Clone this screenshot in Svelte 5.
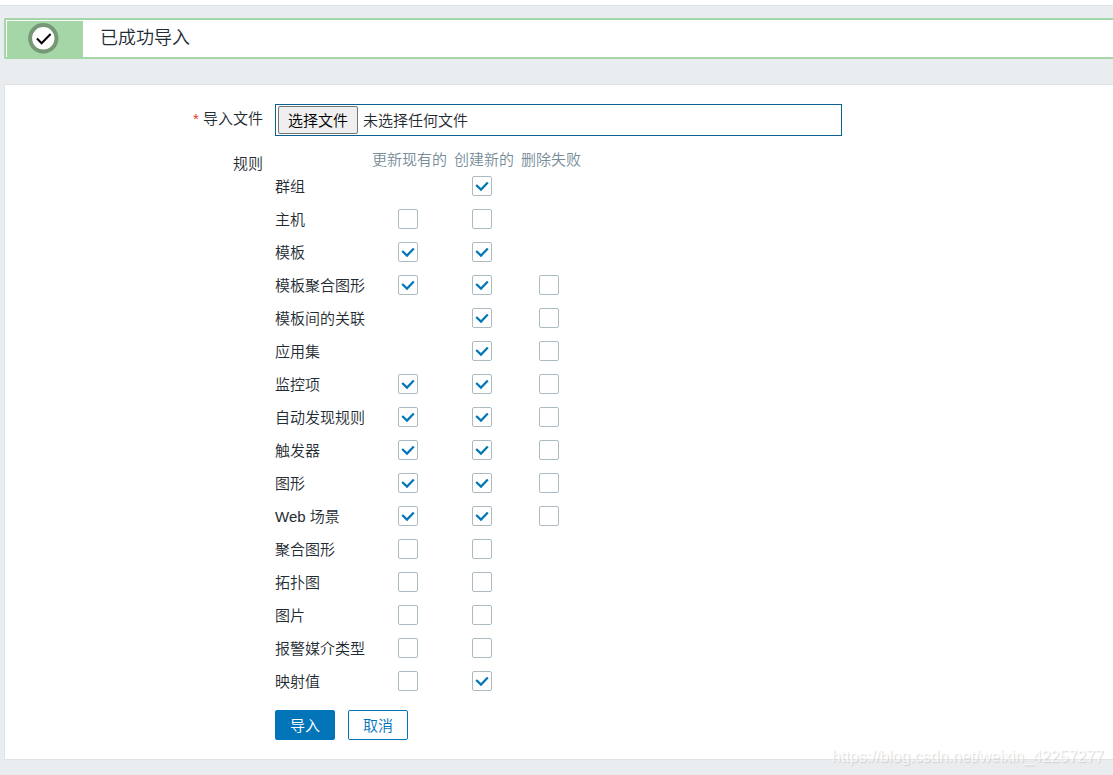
<script lang="ts">

let columns = ['更新现有的', '创建新的', '删除失败']

// null = the option does not exist for this rule
let rules: { name: string, options: (boolean | null)[] }[] = $state([
    { name: '群组', options: [null, true, null] },
    { name: '主机', options: [false, false, null] },
    { name: '模板', options: [true, true, null] },
    { name: '模板聚合图形', options: [true, true, false] },
    { name: '模板间的关联', options: [null, true, false] },
    { name: '应用集', options: [null, true, false] },
    { name: '监控项', options: [true, true, false] },
    { name: '自动发现规则', options: [true, true, false] },
    { name: '触发器', options: [true, true, false] },
    { name: '图形', options: [true, true, false] },
    { name: 'Web 场景', options: [true, true, false] },
    { name: '聚合图形', options: [false, false, null] },
    { name: '拓扑图', options: [false, false, null] },
    { name: '图片', options: [false, false, null] },
    { name: '报警媒介类型', options: [false, false, null] },
    { name: '映射值', options: [false, true, null] }
])

let fileName = $state('')

function fileHandle(e: any) {
    fileName = e.target.files[0]?.name ?? ''
}

</script>

<div class="page">
    <div class="topbar"></div>

    <div class="message" role="status">
        <div class="message-icon">
            <svg width="32" height="32" viewBox="0 0 32 32">
                <circle cx="16.3" cy="16.3" r="13.2" fill="#fff" stroke="#779877" stroke-width="4" />
                <path d="M10 16.5l4.6 4.8 9-9.3" fill="none" stroke="#000" stroke-width="2" />
            </svg>
        </div>
        <span class="message-text">已成功导入</span>
    </div>

    <form class="panel" onsubmit={(e) => e.preventDefault()}>
        <div class="row">
            <label class="row-label" for="import-file"><span class="required">*</span> 导入文件</label>
            <div class="file">
                <span class="file-button">选择文件</span>
                <span class="file-name">{fileName || '未选择任何文件'}</span>
                <input type="file" id="import-file" onchange={fileHandle}>
            </div>
        </div>

        <div class="row rules">
            <span class="row-label" id="rules-label">规则</span>
            <table aria-labelledby="rules-label">
                <thead>
                    <tr>
                        <td></td>
                        {#each columns as column}
                            <th scope="col">{column}</th>
                        {/each}
                    </tr>
                </thead>
                <tbody>
                    {#each rules as rule}
                        <tr>
                            <th scope="row">{rule.name}</th>
                            {#each rule.options as option, i}
                                <td>
                                    {#if option !== null}
                                        <label class="check">
                                            <input type="checkbox" aria-label="{rule.name} {columns[i]}" bind:checked={rule.options[i]}>
                                            <svg width="20" height="20" viewBox="0 0 20 20">
                                                <path d="M4.2 9l4.8 4.6 6.8-7" fill="none" stroke="#0275b8" stroke-width="2.2" />
                                            </svg>
                                        </label>
                                    {/if}
                                </td>
                            {/each}
                        </tr>
                    {/each}
                </tbody>
            </table>
        </div>

        <div class="row">
            <span class="row-label"></span>
            <div class="buttons">
                <button type="submit">导入</button>
                <button type="button" class="button-alt">取消</button>
            </div>
        </div>
    </form>

    <span class="watermark">https://blog.csdn.net/weixin_42257277</span>
</div>

<style>

:global(body) {
    background: #e9edf0;
}

.page {
    position: relative;
    box-sizing: border-box;
    min-height: 100vh;
    padding-bottom: 15px;
    color: #1f2c33;
    font-family: "Liberation Sans", "Noto Sans CJK SC", sans-serif;
    font-size: 15px;
    font-weight: 350;
    line-height: 20px;
}

.topbar {
    height: 5px;
    background: #fff;
    border-bottom: 1px solid #dfe4e7;
}

.message {
    display: flex;
    align-items: stretch;
    height: 37px;
    margin: 12px 0 25px 4px;
    background: #fff;
    border: 2px solid #a5d6a7;
    border-right: none;
    border-radius: 2px 0 0 2px;
}

.message-icon {
    display: flex;
    justify-content: center;
    width: 76px;
    margin: 1px 0 0 1px;
    background: #a5d6a7;
}

.message-icon svg {
    margin-top: 1px;
    margin-right: 4px;
}

.message-text {
    padding-left: 17px;
    font-size: 18px;
    line-height: 37px;
}

.panel {
    margin-left: 4px;
    padding: 19px 0;
    background: #fff;
    border: 1px solid #dfe4e7;
    border-right: none;
}

.row {
    display: flex;
    gap: 12px;
}

.row-label {
    flex: 0 0 258px;
    padding-top: 5px;
    text-align: right;
}

.required {
    color: #e33734;
}

.file {
    position: relative;
    display: flex;
    align-items: center;
    flex: 0 1 567px;
    box-sizing: border-box;
    height: 32px;
    padding: 0 2px;
    border: 1px solid #0a6192;
}

.file-button {
    box-sizing: border-box;
    height: 28px;
    padding: 0 9px;
    background: #efefef;
    border: 1px solid #767676;
    border-radius: 2px;
    color: #000;
    line-height: 28px;
}

.file-name {
    padding: 2px 0 0 5px;
}

/* the native control lies over the drawn one and takes the clicks */
.file input {
    position: absolute;
    inset: 0;
    width: 100%;
    opacity: 0;
    cursor: pointer;
}

.rules {
    margin: 13px 0;
}

table {
    border-collapse: collapse;
}

th, td {
    padding: 0;
    font-weight: 350;
    white-space: nowrap;
}

thead th {
    padding: 2px 7px 0 0;
    color: #768d99;
    line-height: 18px;
}

tbody th {
    padding: 2px 7px 0 0;
    line-height: 31px;
    text-align: left;
}

tbody td {
    padding-right: 11px;
    text-align: center;
}

.check {
    position: relative;
    display: block;
    width: 20px;
    height: 20px;
    margin: 0 auto;
}

.check input {
    appearance: none;
    display: block;
    box-sizing: border-box;
    width: 20px;
    height: 20px;
    margin: 0;
    background: #fff;
    border: 1px solid #acbbc2;
    border-radius: 2px;
}

.check svg {
    position: absolute;
    inset: 0;
    visibility: hidden;
    pointer-events: none;
}

.check input:checked + svg {
    visibility: visible;
}

.buttons {
    display: flex;
    gap: 13px;
}

button {
    box-sizing: border-box;
    height: 30px;
    padding: 2px 14px 0;
    background: #0275b8;
    border: 1px solid #0275b8;
    border-radius: 2px;
    color: #fff;
    font: inherit;
    cursor: pointer;
}

.button-alt {
    background: #fff;
    color: #0275b8;
}

.watermark {
    position: absolute;
    right: 9px;
    bottom: 8px;
    color: #fff;
    font-size: 16px;
    text-shadow: 1px 1px 1px #bbb;
    opacity: 0.6;
}

</style>
